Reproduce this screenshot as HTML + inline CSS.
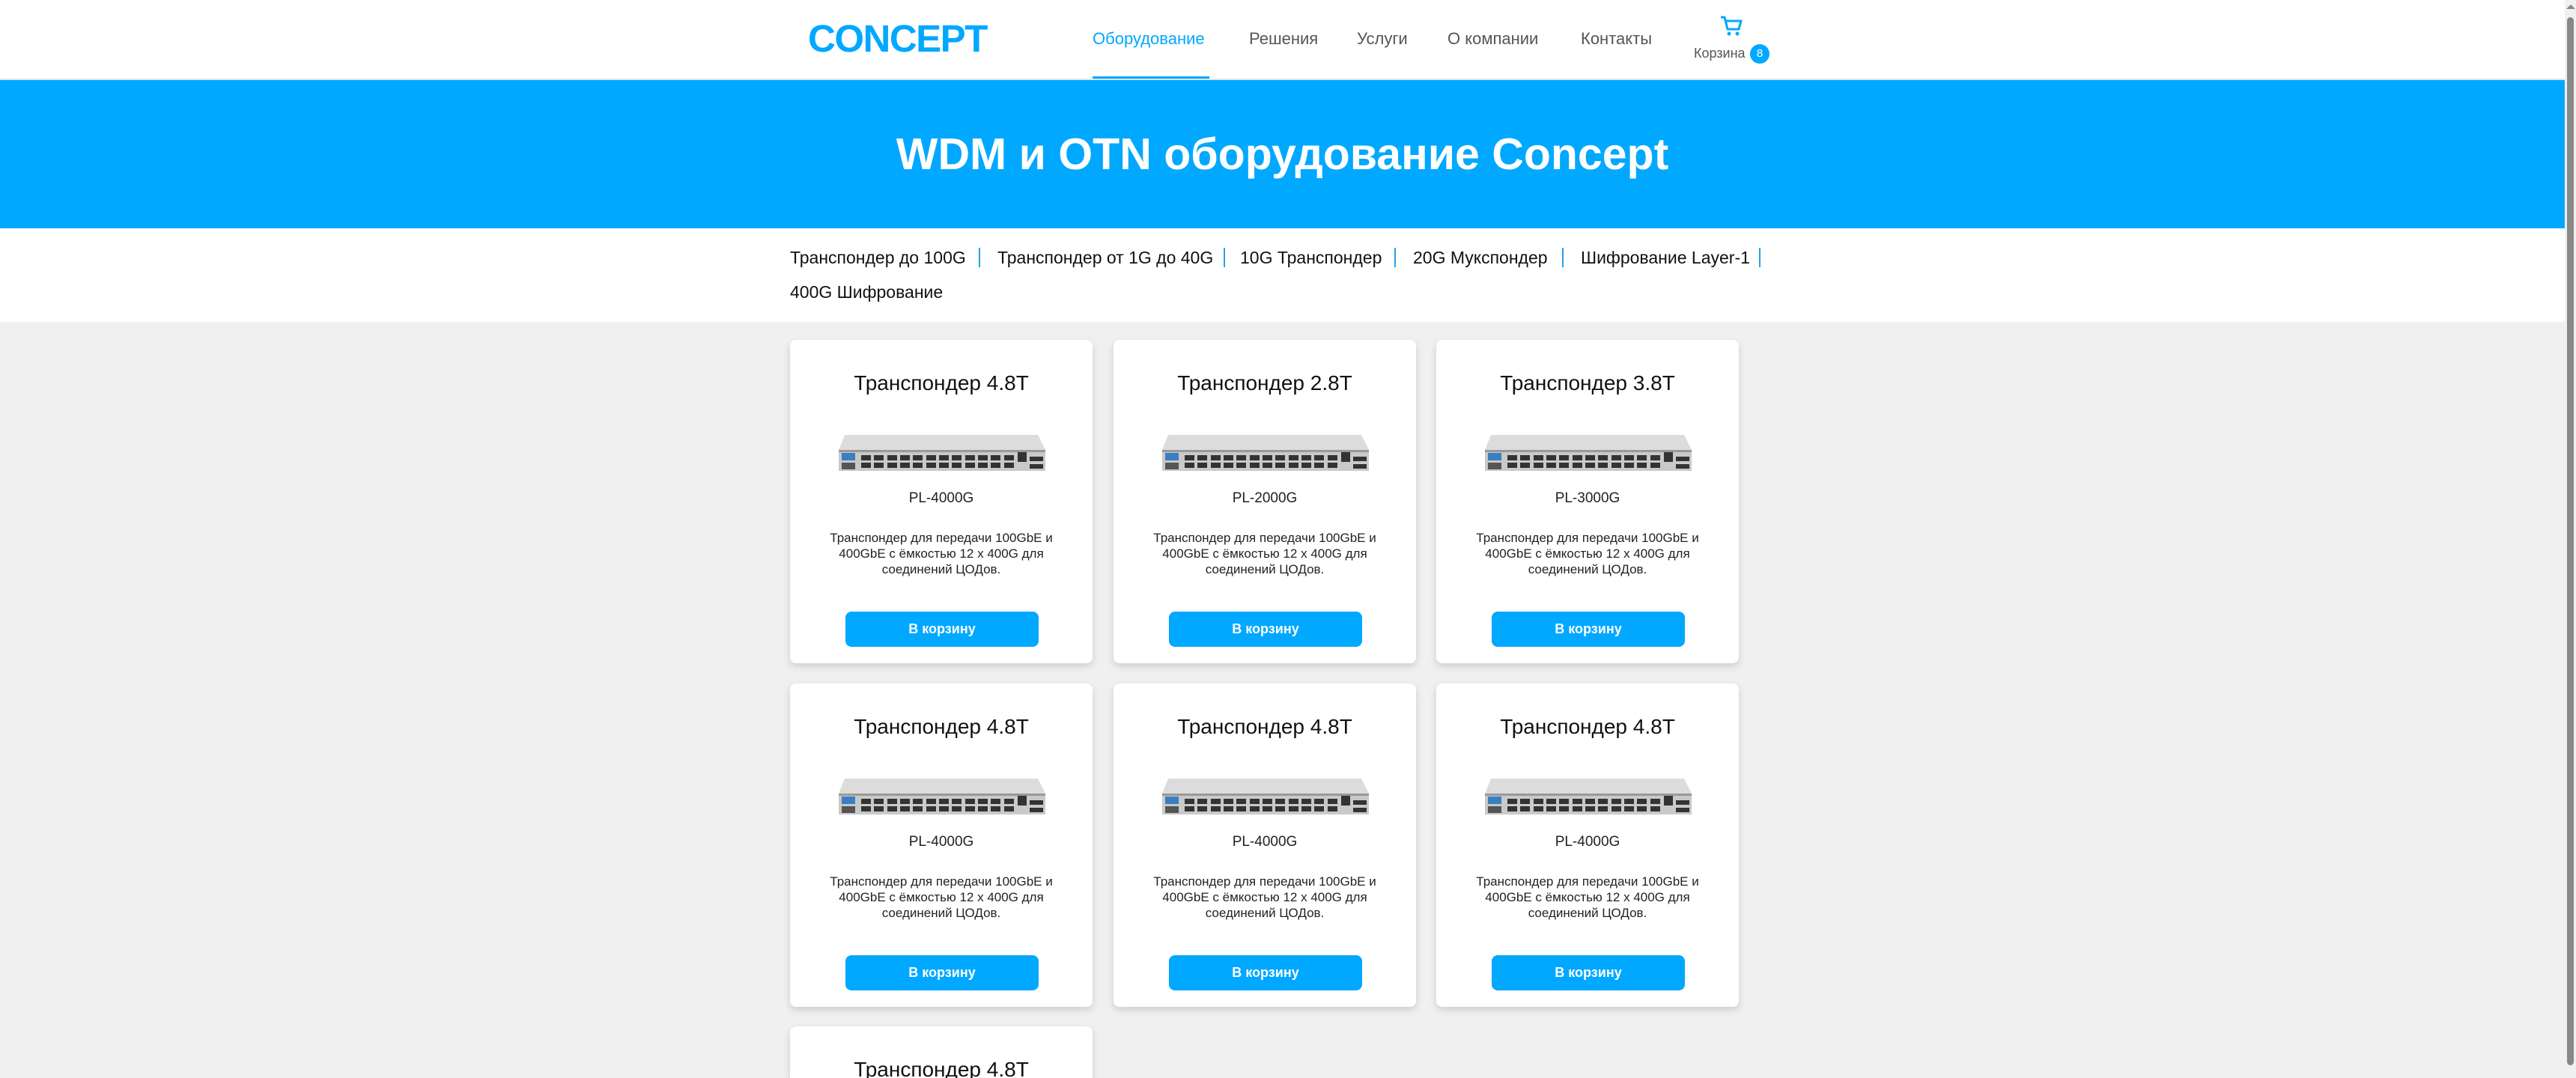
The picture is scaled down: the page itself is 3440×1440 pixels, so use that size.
<!DOCTYPE html>
<html style="width:3440px;height:1440px;overflow:hidden"><head><meta charset="utf-8"><style>
*{margin:0;padding:0;box-sizing:border-box}
body{width:3440px;height:1440px;overflow:hidden;background:#f0f0f0;font-family:"Liberation Sans",sans-serif}
#w{position:relative;width:3440px;height:1440px;overflow:hidden;background:#f0f0f0}
.a{position:absolute}
.hdr{left:0;top:0;width:3425px;height:107px;background:#fff;border-bottom:2px solid #e4e4e4}
.logo{left:1079px;top:22px;font-size:51px;font-weight:bold;color:#00a8ff;letter-spacing:-1.5px;line-height:60px}
.nav{top:38px;font-size:22px;color:#555;line-height:28px}
.band{left:0;top:107px;width:3425px;height:198px;background:#00a8ff;color:#fff;font-weight:bold;font-size:59px;text-align:center;line-height:198px}
.flt{left:0;top:305px;width:3425px;height:125px;background:#fff}
.fl{font-size:23px;color:#111;line-height:28px}
.sep{width:2px;height:26px;background:#2aa0e8}
.card{width:404px;height:432px;background:#fff;border-radius:8px;box-shadow:0 4px 10px rgba(0,0,0,.15);text-align:center;overflow:hidden}
.card h3{position:absolute;left:0;right:0;top:42px;font-weight:normal;font-size:28px;color:#111}
.card svg{position:absolute;left:63px;top:121px}
.card .m{position:absolute;left:0;right:0;top:201px;font-size:19px;color:#222}
.card .d{position:absolute;left:40px;right:40px;top:254px;font-size:17px;line-height:21px;color:#222}
.card .b{position:absolute;left:74px;top:363px;width:258px;height:47px;border-radius:8px;background:#00a8ff;color:#fff;font-weight:bold;font-size:18px;line-height:47px}
.sb{left:3425px;top:0;width:15px;height:1440px;background:#f0f0f0}
.th{left:3428px;top:23px;width:9px;height:1400px;background:#888;border-radius:5px}
</style></head><body><div id="w">
<div class="a hdr"></div>
<div class="a logo">CONCEPT</div>
<div class="a nav" style="left:1459px;color:#00a8ff">Оборудование</div>
<div class="a" style="left:1459px;top:102px;width:156px;height:3px;background:#00a8ff"></div>
<div class="a nav" style="left:1668px">Решения</div>
<div class="a nav" style="left:1812px">Услуги</div>
<div class="a nav" style="left:1933px">О компании</div>
<div class="a nav" style="left:2111px">Контакты</div>
<svg class="a" style="left:2296px;top:20px" width="32" height="30" viewBox="0 0 32 30"><path d="M2 3h5l4 16h15l3-11H9" fill="none" stroke="#00a8ff" stroke-width="3" stroke-linejoin="round"/><circle cx="13" cy="25" r="2.5" fill="#00a8ff"/><circle cx="24" cy="25" r="2.5" fill="#00a8ff"/></svg>
<div class="a" style="left:2262px;top:61px;font-size:18px;color:#555">Корзина</div>
<div class="a" style="left:2337px;top:59px;width:26px;height:26px;border-radius:13px;background:#00a8ff;color:#fff;font-size:15px;text-align:center;line-height:26px">8</div>
<div class="a band">WDM и OTN оборудование Concept</div>
<div class="a flt"></div>
<div class="a fl" style="left:1055px;top:330px">Транспондер до 100G</div>
<div class="a sep" style="left:1307px;top:331px"></div>
<div class="a fl" style="left:1332px;top:330px">Транспондер от 1G до 40G</div>
<div class="a sep" style="left:1634px;top:331px"></div>
<div class="a fl" style="left:1656px;top:330px">10G Транспондер</div>
<div class="a sep" style="left:1862px;top:331px"></div>
<div class="a fl" style="left:1887px;top:330px">20G Мукспондер</div>
<div class="a sep" style="left:2086px;top:331px"></div>
<div class="a fl" style="left:2111px;top:330px">Шифрование Layer-1</div>
<div class="a sep" style="left:2349px;top:331px"></div>
<div class="a fl" style="left:1055px;top:376px">400G Шифрование</div>

<svg width="0" height="0" style="position:absolute"><defs>
<g id="dev">
<polygon points="10,6 268,6 278,26 2,26" fill="#dcdcdc"/>
<rect x="2" y="26" width="276" height="28" fill="#c9c9c9"/>
<rect x="2" y="26" width="276" height="3" fill="#999"/>
<rect x="6" y="30" width="18" height="10" fill="#3a7fc0"/>
<rect x="6" y="43" width="18" height="9" fill="#555"/>
<g fill="#333">
<rect x="32" y="33" width="13" height="7"/><rect x="32" y="43" width="13" height="7"/>
<rect x="49" y="33" width="13" height="7"/><rect x="49" y="43" width="13" height="7"/>
<rect x="67" y="33" width="13" height="7"/><rect x="67" y="43" width="13" height="7"/>
<rect x="84" y="33" width="13" height="7"/><rect x="84" y="43" width="13" height="7"/>
<rect x="101" y="33" width="13" height="7"/><rect x="101" y="43" width="13" height="7"/>
<rect x="119" y="33" width="13" height="7"/><rect x="119" y="43" width="13" height="7"/>
<rect x="136" y="33" width="13" height="7"/><rect x="136" y="43" width="13" height="7"/>
<rect x="153" y="33" width="13" height="7"/><rect x="153" y="43" width="13" height="7"/>
<rect x="171" y="33" width="13" height="7"/><rect x="171" y="43" width="13" height="7"/>
<rect x="188" y="33" width="13" height="7"/><rect x="188" y="43" width="13" height="7"/>
<rect x="205" y="33" width="13" height="7"/><rect x="205" y="43" width="13" height="7"/>
<rect x="223" y="33" width="13" height="7"/><rect x="223" y="43" width="13" height="7"/>
<rect x="241" y="29" width="12" height="13"/>
<rect x="257" y="35" width="18" height="6"/><rect x="257" y="45" width="18" height="6"/>
</g></g></defs></svg>

<div class="a card" style="left:1055px;top:454px"><h3>Транспондер 4.8T</h3><svg width="280" height="60"><use href="#dev"/></svg><div class="m">PL-4000G</div><div class="d">Транспондер для передачи 100GbE и 400GbE с ёмкостью 12 x 400G для соединений ЦОДов.</div><div class="b">В корзину</div></div>
<div class="a card" style="left:1487px;top:454px"><h3>Транспондер 2.8T</h3><svg width="280" height="60"><use href="#dev"/></svg><div class="m">PL-2000G</div><div class="d">Транспондер для передачи 100GbE и 400GbE с ёмкостью 12 x 400G для соединений ЦОДов.</div><div class="b">В корзину</div></div>
<div class="a card" style="left:1918px;top:454px"><h3>Транспондер 3.8T</h3><svg width="280" height="60"><use href="#dev"/></svg><div class="m">PL-3000G</div><div class="d">Транспондер для передачи 100GbE и 400GbE с ёмкостью 12 x 400G для соединений ЦОДов.</div><div class="b">В корзину</div></div>
<div class="a card" style="left:1055px;top:913px"><h3>Транспондер 4.8T</h3><svg width="280" height="60"><use href="#dev"/></svg><div class="m">PL-4000G</div><div class="d">Транспондер для передачи 100GbE и 400GbE с ёмкостью 12 x 400G для соединений ЦОДов.</div><div class="b">В корзину</div></div>
<div class="a card" style="left:1487px;top:913px"><h3>Транспондер 4.8T</h3><svg width="280" height="60"><use href="#dev"/></svg><div class="m">PL-4000G</div><div class="d">Транспондер для передачи 100GbE и 400GbE с ёмкостью 12 x 400G для соединений ЦОДов.</div><div class="b">В корзину</div></div>
<div class="a card" style="left:1918px;top:913px"><h3>Транспондер 4.8T</h3><svg width="280" height="60"><use href="#dev"/></svg><div class="m">PL-4000G</div><div class="d">Транспондер для передачи 100GbE и 400GbE с ёмкостью 12 x 400G для соединений ЦОДов.</div><div class="b">В корзину</div></div>
<div class="a card" style="left:1055px;top:1371px;height:69px;border-radius:8px 8px 0 0"><h3>Транспондер 4.8T</h3></div>

<div class="a sb"></div>
<div class="a th"></div>
<div class="a" style="left:3427px;top:6px;width:0;height:0;border-left:6px solid transparent;border-right:6px solid transparent;border-bottom:6px solid #888"></div>
</div></body></html>
